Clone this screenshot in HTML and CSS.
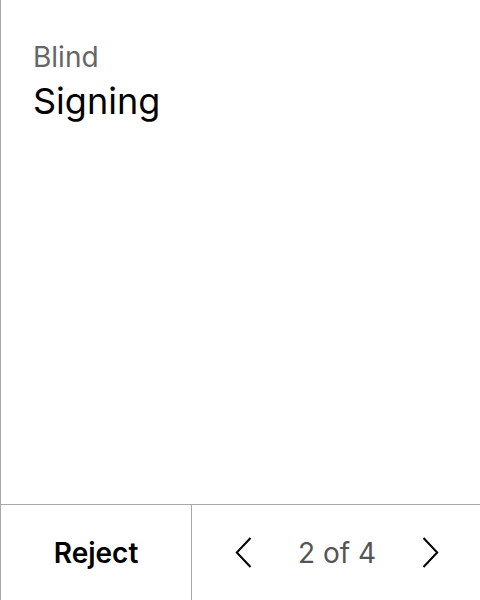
FILE: index.html
```html
<!DOCTYPE html>
<html>
<head>
<meta charset="utf-8">
<link rel="stylesheet" href="styles.css">
</head>
<body>
<div class="screen">
  <div class="content">
    <div class="label">Blind</div>
    <div class="title">Signing</div>
  </div>
  <div class="footer">
    <button class="reject">Reject</button>
    <div class="pager">
      <button class="nav" aria-label="Previous">
        <svg width="17" height="31" viewBox="0 0 17 31"><path d="M15.5 1 L1.8 15.5 L15.5 30" fill="none" stroke="#000" stroke-width="2"/></svg>
      </button>
      <span class="count">2 of 4</span>
      <button class="nav" aria-label="Next">
        <svg width="17" height="31" viewBox="0 0 17 31"><path d="M1.5 1 L15.2 15.5 L1.5 30" fill="none" stroke="#000" stroke-width="2"/></svg>
      </button>
    </div>
  </div>
</div>
</body>
</html>
```
FILE: styles.css
```css
html, body {
  margin: 0;
  padding: 0;
  background: #fff;
}
body {
  font-family: Inter, "Noto Sans", sans-serif;
}
.screen {
  width: 480px;
  height: 600px;
  box-sizing: border-box;
  border-left: 1px solid #a8a8a8;
  display: flex;
  flex-direction: column;
}
.content {
  flex: 1;
  padding: 40px 32px 0;
}
.label {
  font-size: 28px;
  line-height: 34px;
  color: #666;
}
.title {
  font-size: 36px;
  line-height: 44px;
  color: #000;
  margin-top: 5px;
}
.footer {
  height: 96px;
  border-top: 1px solid #a8a8a8;
  display: flex;
  box-sizing: border-box;
}
.reject {
  width: 191px;
  border: 0;
  border-right: 1px solid #a8a8a8;
  background: none;
  font-family: inherit;
  font-size: 28px;
  font-weight: 600;
  color: #000;
  padding: 0;
}
.pager {
  flex: 1;
  display: flex;
  align-items: center;
  justify-content: space-between;
  padding: 0 41px 0 43px;
}
.nav {
  border: 0;
  background: none;
  padding: 0;
  display: flex;
}
.count {
  font-size: 28px;
  color: #555;
}
```
